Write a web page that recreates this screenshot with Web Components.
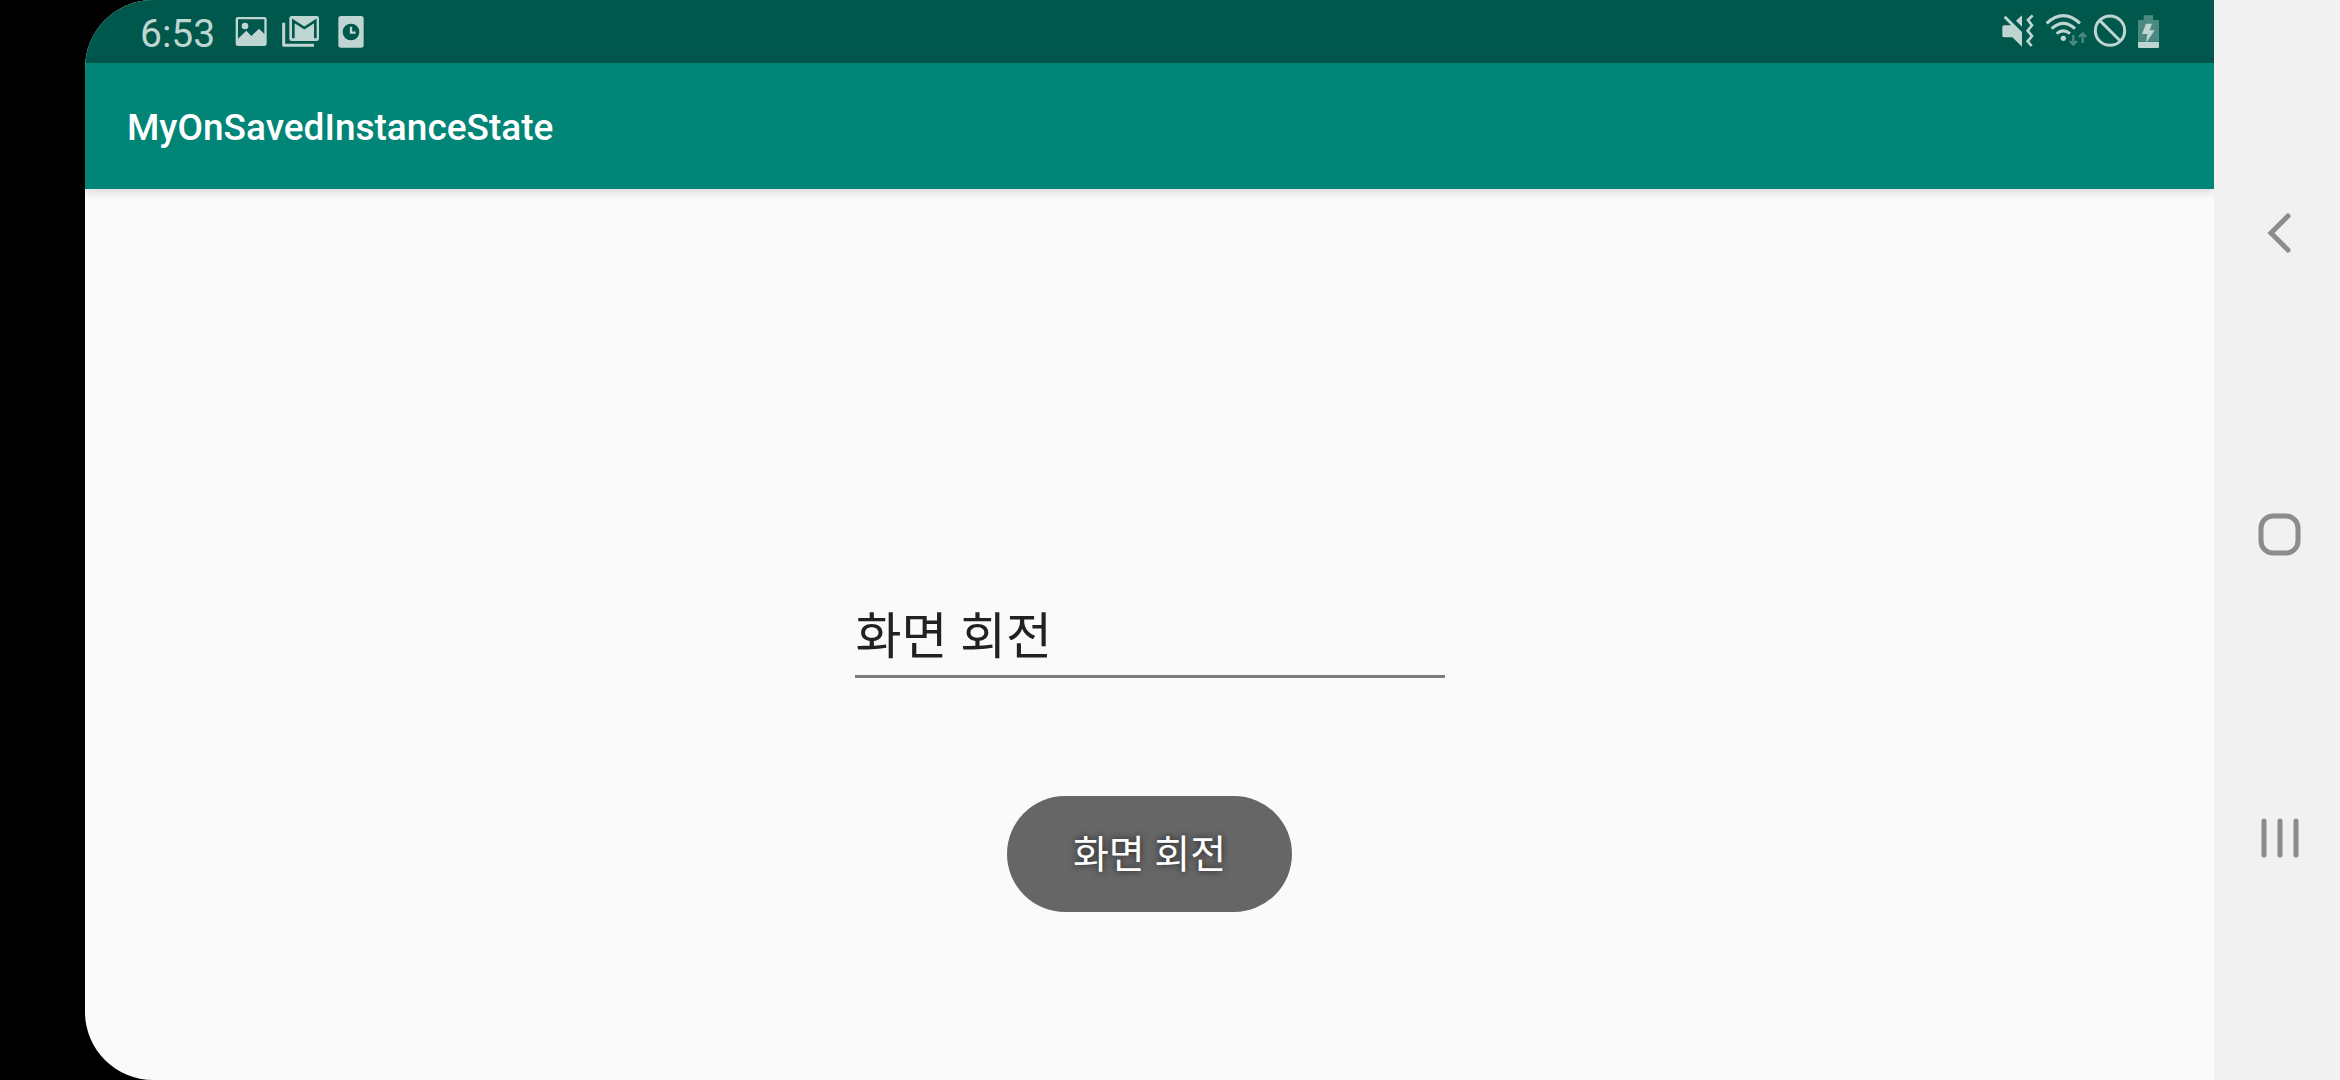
<!DOCTYPE html>
<html lang="ko">
<head>
<meta charset="utf-8">
<title>MyOnSavedInstanceState</title>
<style>
    body { margin: 0; background: #000; font-family: Roboto, "Noto Sans CJK KR", sans-serif; }
</style>
</head>
<body>
<device-screen>
    <status-bar slot="status" time="6:53"></status-bar>
    <app-bar slot="bar">MyOnSavedInstanceState</app-bar>
    <edit-text label="메모" value="화면 회전"></edit-text>
    <toast-message slot="toast">화면 회전</toast-message>
    <nav-bar slot="nav"></nav-bar>
</device-screen>

<script>
/**
 * <device-screen>
 * Landscape phone frame: camera cutout, app window and navigation bar.
 */
class DeviceScreen extends HTMLElement {
    constructor() {
        super();
        this.attachShadow({ mode: 'open' }).innerHTML = `
            <style>
                :host { display: flex; min-height: 100vh; padding-left: 85px; box-sizing: border-box; background: #000; }
                .window { position: relative; flex: 1; display: flex; flex-direction: column; background: #fafafa; border-radius: 68px 0 0 68px; overflow: hidden; }
                main { flex: 1; display: flex; align-items: center; justify-content: center; }
                .toast { position: absolute; left: 0; right: 0; bottom: 168px; display: flex; justify-content: center; }
            </style>
            <div class="window">
                <slot name="status"></slot>
                <slot name="bar"></slot>
                <main><slot></slot></main>
                <div class="toast"><slot name="toast"></slot></div>
            </div>
            <slot name="nav"></slot>
        `;
    }
}

/**
 * <status-bar time="...">
 * Clock and notifications on the left, system icons on the right.
 */
class StatusBar extends HTMLElement {
    constructor() {
        super();
        this.attachShadow({ mode: 'open' }).innerHTML = `
            <style>
                :host { display: flex; align-items: center; justify-content: space-between; height: 63px; padding: 0 48px 0 55px; background: #00574b; color: #bfd5d2; }
                .group { display: flex; align-items: center; height: 63px; }
                .notes { gap: 12px; }
                time { padding-top: 4px; margin-right: 5px; font-size: 39px; line-height: 60px; }
                svg { display: block; height: 37px; fill: #bfd5d2; }
                .line { fill: none; stroke: #bfd5d2; }
                .cut { fill: #00574b; }
                .cut-line { fill: none; stroke: #00574b; }
                .dim { opacity: 0.4; }
            </style>
            <div class="group notes">
                <time>${this.getAttribute('time') || ''}</time>
                <svg width="38" viewBox="486 39 114 111" aria-hidden="true">
                    <rect x="497" y="51" width="93" height="87" rx="7"/>
                    <path class="cut" d="M504 58H583V102L567 86L544 108L529 92L504 116Z"/>
                    <circle cx="525" cy="78" r="10"/>
                </svg>
                <svg width="38" viewBox="636 39 114 111" aria-hidden="true">
                    <path class="line" stroke-width="9" stroke-linejoin="round" d="M641 68V136H732"/>
                    <rect x="658" y="48" width="89" height="75" rx="7"/>
                    <path class="cut-line" stroke-width="8" d="M670 115V63L703 84L736 63V115"/>
                </svg>
                <svg width="38" viewBox="786 39 114 111" aria-hidden="true">
                    <rect x="805" y="48" width="76" height="95" rx="8"/>
                    <circle class="cut" cx="843" cy="96" r="25"/>
                    <path class="line" stroke-width="7" d="M843 80V98H857"/>
                </svg>
            </div>
            <div class="group">
                <svg width="40" viewBox="60 39 120 111" aria-hidden="true">
                    <path d="M71 53L77 47L126 96V140L97 112H72Q67 112 67 107V81Q67 76 72 76H93ZM108 62L126 46V80Z"/>
                    <path class="line" stroke-width="8" d="M158 46L144 60L156 76L143 92L156 108L143 124L155 138"/>
                </svg>
                <svg width="50" viewBox="180 39 150 111" aria-hidden="true">
                    <path class="line" stroke-width="9" d="M200 70Q250 24 300 70M215 86Q250 54 285 86M230 101Q250 84 270 101"/>
                    <circle cx="250" cy="115" r="8"/>
                    <path class="line dim" stroke-width="7" d="M280 105V134M269 123L280 134L291 123M308 129V100M297 111L308 100L319 111"/>
                </svg>
                <svg width="40" viewBox="330 39 120 111" aria-hidden="true">
                    <circle class="line" stroke-width="9" cx="390" cy="92" r="44"/>
                    <path class="line" stroke-width="9" d="M359 61L421 123"/>
                </svg>
                <svg width="36" viewBox="450 39 108 111" aria-hidden="true">
                    <path class="dim" d="M491 46H519V60H534Q537 60 537 63V125H474V63Q474 60 477 60H491Z"/>
                    <path d="M474 126H537V140Q537 144 533 144H478Q474 144 474 140Z"/>
                    <path d="M498 71H516L509 91H524L498 129L502 102H486Z"/>
                </svg>
            </div>
        `;
    }
}

/**
 * <app-bar>
 * Activity title.
 */
class AppBar extends HTMLElement {
    constructor() {
        super();
        this.attachShadow({ mode: 'open' }).innerHTML = `
            <style>
                :host { display: flex; align-items: center; box-sizing: border-box; height: 126px; padding: 4px 42px 0; background: #008577; color: #fff; box-shadow: 0 2px 10px rgba(0, 0, 0, 0.16); }
                h1 { margin: 0; font-size: 37px; font-weight: 500; line-height: 48px; }
            </style>
            <h1><slot></slot></h1>
        `;
    }
}

/**
 * <edit-text label="..." value="...">
 * Underlined single line text field.
 */
class EditText extends HTMLElement {
    constructor() {
        super();
        this.attachShadow({ mode: 'open' }).innerHTML = `
            <style>
                :host { display: block; width: 590px; max-width: 90%; }
                input { display: block; box-sizing: border-box; width: 100%; height: 86px; padding: 0 1px 2px; border: 0; border-bottom: 3px solid #7c7c7c; border-radius: 0; outline: 0; background: none; color: #212121; font: inherit; font-size: 50px; }
            </style>
            <input type="text">
        `;
        const input = this.shadowRoot.querySelector('input');
        input.value = this.getAttribute('value') || '';
        input.setAttribute('aria-label', this.getAttribute('label') || '');
    }
}

/**
 * <toast-message>
 * Short message floating over the window.
 */
class ToastMessage extends HTMLElement {
    constructor() {
        super();
        this.attachShadow({ mode: 'open' }).innerHTML = `
            <style>
                :host { display: block; padding: 31px 66px 29px; border-radius: 58px; background: #666; color: #fff; font-size: 39px; line-height: 56px; text-shadow: 0 0 7px rgba(0, 0, 0, 0.7); }
            </style>
            <div role="status"><slot></slot></div>
        `;
    }
}

/**
 * <nav-bar>
 * Back, home and recents keys.
 */
class NavBar extends HTMLElement {
    constructor() {
        super();
        this.attachShadow({ mode: 'open' }).innerHTML = `
            <style>
                :host { display: flex; flex-direction: column; box-sizing: border-box; width: 126px; padding: 82px 0 91px 6px; background: #f1f1f1; }
                button { flex: 1; display: flex; align-items: center; justify-content: center; padding: 0; border: 0; background: none; }
                svg { width: 48px; height: 48px; fill: none; stroke: #8c8c8c; stroke-width: 5; stroke-linecap: round; }
            </style>
            <button type="button" aria-label="Back"><svg viewBox="0 0 48 48"><path d="M32 7L15 24L32 41"/></svg></button>
            <button type="button" aria-label="Home"><svg viewBox="0 0 48 48"><rect x="5" y="5" width="37" height="37" rx="12"/></svg></button>
            <button type="button" aria-label="Recents"><svg viewBox="0 0 48 48"><path d="M8 7V41M24 7V41M40 7V41"/></svg></button>
        `;
    }
}

customElements.define('device-screen', DeviceScreen);
customElements.define('status-bar', StatusBar);
customElements.define('app-bar', AppBar);
customElements.define('edit-text', EditText);
customElements.define('toast-message', ToastMessage);
customElements.define('nav-bar', NavBar);
</script>
</body>
</html>
